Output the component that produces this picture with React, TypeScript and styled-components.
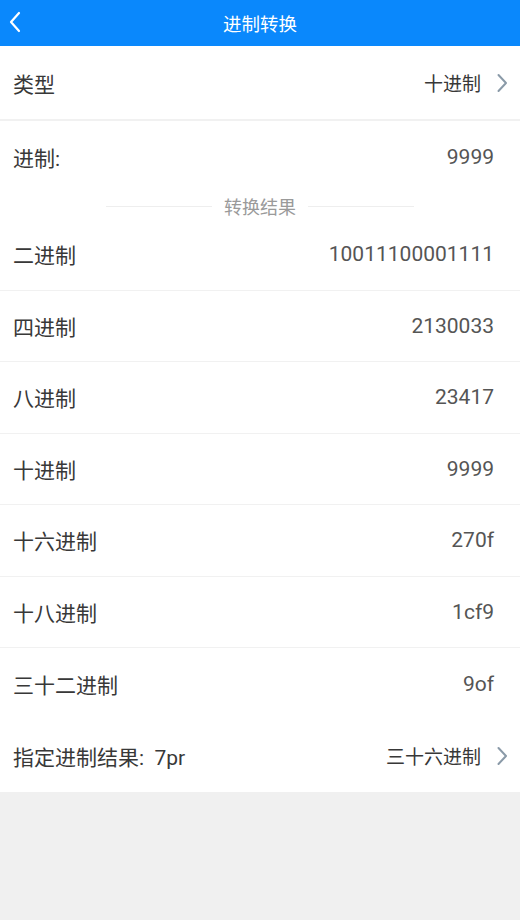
import React from "react";
import styled, { createGlobalStyle } from "styled-components";

const GlobalStyle = createGlobalStyle`
  html, body {
    margin: 0;
    padding: 0;
    background: #f0f0f0;
    font-family: "Roboto", "Noto Sans CJK SC", sans-serif;
  }
  * { box-sizing: border-box; }
`;

const Page = styled.div`
  width: 520px;
  min-height: 920px;
  background: #f0f0f0;
  display: flex;
  flex-direction: column;
`;

const Header = styled.div`
  height: 46px;
  background: #0a88fc;
  display: flex;
  align-items: center;
  justify-content: center;
  position: relative;
`;

const BackButton = styled.div`
  position: absolute;
  left: 8px;
  top: 10px;
  width: 18px;
  height: 24px;
  display: flex;
  align-items: center;
`;

const Title = styled.h1`
  margin: 0;
  color: #ffffff;
  font-size: 18.5px;
  font-weight: 400;
`;

const Body = styled.div`
  background: #ffffff;
  display: flex;
  flex-direction: column;
`;

const Row = styled.div<{ $h: number; $line?: number }>`
  height: ${(p) => p.$h}px;
  display: flex;
  align-items: center;
  justify-content: space-between;
  padding: 0 26px 0 13px;
  border-bottom: ${(p) => (p.$line ? `${p.$line}px solid #f1f1f1` : "none")};
`;

const SelectRow = styled(Row)`
  padding-right: 12px;
`;

const Label = styled.span`
  color: #383838;
  font-size: 21px;
`;

const Value = styled.span`
  color: #555555;
  font-size: 21px;
`;

const Picker = styled.div`
  display: flex;
  align-items: center;
  gap: 16px;
  color: #383838;
  font-size: 19px;
`;

const Section = styled.div`
  height: 26px;
  display: flex;
  align-items: center;
  justify-content: center;
  gap: 12px;
`;

const Rule = styled.div`
  width: 106px;
  height: 1px;
  background: #eeeeee;
`;

const SectionTitle = styled.span`
  color: #9a9a9a;
  font-size: 18px;
`;

const Chevron = () => (
  <svg width="11" height="20" viewBox="0 0 11 20">
    <polyline
      points="1.5,2 9,10 1.5,18"
      fill="none"
      stroke="#8a9aa8"
      strokeWidth="2"
      strokeLinecap="round"
      strokeLinejoin="round"
    />
  </svg>
);

const results = [
  { name: "二进制", value: "10011100001111" },
  { name: "四进制", value: "2130033" },
  { name: "八进制", value: "23417" },
  { name: "十进制", value: "9999" },
  { name: "十六进制", value: "270f" },
  { name: "十八进制", value: "1cf9" },
  { name: "三十二进制", value: "9of" },
];

export default function App() {
  return (
    <Page>
      <GlobalStyle />
      <Header>
        <BackButton>
          <svg width="14" height="22" viewBox="0 0 14 22">
            <polyline
              points="11,2 3,11 11,20"
              fill="none"
              stroke="#ffffff"
              strokeWidth="2.2"
              strokeLinecap="round"
              strokeLinejoin="round"
            />
          </svg>
        </BackButton>
        <Title>进制转换</Title>
      </Header>
      <Body>
        <SelectRow $h={75} $line={2}>
          <Label>类型</Label>
          <Picker>
            十进制
            <Chevron />
          </Picker>
        </SelectRow>
        <Row $h={72}>
          <Label>进制:</Label>
          <Value>9999</Value>
        </Row>
        <Section>
          <Rule />
          <SectionTitle>转换结果</SectionTitle>
          <Rule />
        </Section>
        {results.map((r, i) => (
          <Row key={r.name} $h={71.5} $line={i < results.length - 1 ? 1 : 0}>
            <Label>{r.name}</Label>
            <Value>{r.value}</Value>
          </Row>
        ))}
        <SelectRow $h={72}>
          <Label>指定进制结果:&nbsp;&nbsp;7pr</Label>
          <Picker>
            三十六进制
            <Chevron />
          </Picker>
        </SelectRow>
      </Body>
    </Page>
  );
}
